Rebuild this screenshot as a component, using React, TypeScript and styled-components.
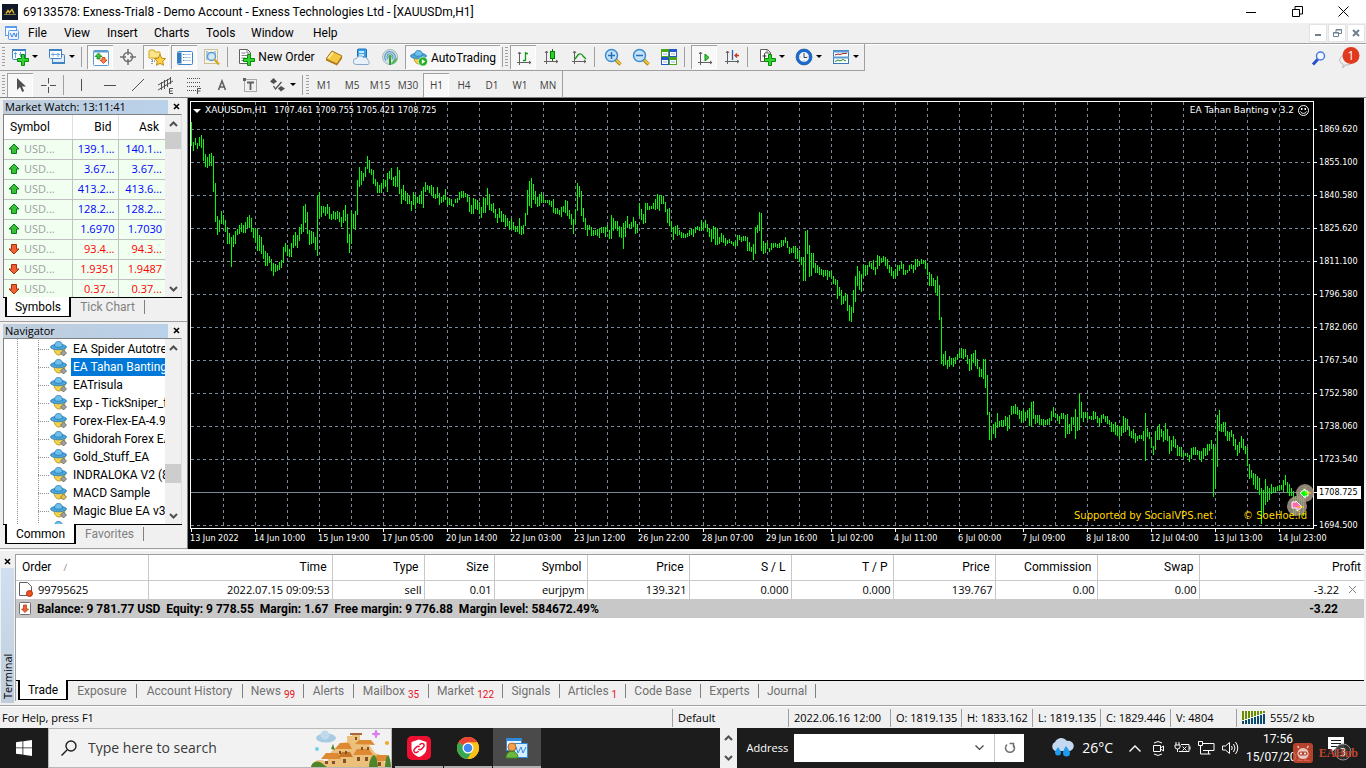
import React from "react";
import styled, { createGlobalStyle, css } from "styled-components";

const uiFont = `"Open Sans", "Noto Sans", sans-serif`;
const menuFont = `Roboto, "Open Sans", sans-serif`;
const chartFont = `"DejaVu Sans Condensed", "DejaVu Sans", sans-serif`;

const Global = createGlobalStyle`
  * { box-sizing: border-box; }
  body { margin: 0; background: #f0f0f0; font: 11px/16px ${uiFont}; color: #000; overflow: hidden; }
  button, input { font: inherit; color: inherit; border: 0; padding: 0; margin: 0; background: none; }
  svg { display: block; flex: none; }
  table { border-collapse: collapse; table-layout: fixed; }
  th { font-weight: 400; }
`;

const menuText = css`
  font-family: ${menuFont};
  font-size: 12px;
`;

/* ---------- window frame ---------- */

const Page = styled.div`
  display: flex;
  flex-direction: column;
  height: 100vh;
`;

const TitleBar = styled.header`
  display: flex;
  align-items: center;
  height: 23px;
  flex: none;
  padding-left: 2px;
  background: #fff;
`;
const Title = styled.h1`
  ${menuText}
  flex: 1;
  margin: 0 0 0 5px;
  font-weight: 400;
  line-height: 20px;
`;
const WindowButton = styled.button`
  display: grid;
  place-items: center;
  width: 46px;
  height: 21px;
`;

const MenuBar = styled.nav`
  display: flex;
  align-items: center;
  height: 20px;
  flex: none;
  padding: 0 1px 0 4px;
`;
const Menus = styled.div`
  display: flex;
  flex: 1;
  padding-left: 8px;
`;
const MenuItem = styled.button<{ $w: number }>`
  ${menuText}
  width: ${(p) => p.$w}px;
  text-align: left;
`;
const Spacer = styled.span`
  flex: 1;
`;
const ChildButton = styled.button`
  display: grid;
  place-items: center;
  width: 18px;
  height: 18px;
  margin-left: 1px;
  background: #fff;
  border: 1px solid #e2e2e2;
`;

/* ---------- toolbars ---------- */

const ToolbarRow = styled.div`
  display: flex;
  align-items: flex-start;
  justify-content: space-between;
  height: 28px;
  flex: none;
  border-top: 1px solid #a0a0a0;
  box-shadow: inset 0 1px #fff;
`;
const ToolbarRow2 = styled.div`
  height: 27px;
  flex: none;
  border-bottom: 1px solid #808080;
`;
const Toolbar = styled.div<{ $line?: boolean }>`
  display: flex;
  align-items: center;
  height: 27px;
  padding-left: 2px;
  border-right: 1px solid #a0a0a0;
  ${(p) => p.$line && "border-bottom: 1px solid #a0a0a0;"}
  width: max-content;
`;
const Grip = styled.span`
  width: 3px;
  height: 20px;
  margin-right: 1px;
  background: repeating-linear-gradient(#a0a0a0 0 1px, transparent 1px 3px);
`;
const Divider = styled.span<{ $w: number }>`
  width: ${(p) => p.$w}px;
  height: 20px;
  background: linear-gradient(#a0a0a0, #a0a0a0) 1px 0 / 1px 100% no-repeat;
`;
const ToolButton = styled.button<{ $on?: boolean; $w?: number }>`
  display: flex;
  align-items: center;
  justify-content: center;
  gap: 3px;
  width: ${(p) => p.$w ?? 26}px;
  height: 24px;
  margin: 0 1px;
  color: #505050;
  white-space: nowrap;
  ${(p) =>
    p.$on &&
    css`
      background: #f8f8f8;
      border-top: 1px solid #a0a0a0;
      border-left: 1px solid #a0a0a0;
      box-shadow: inset -1px -1px #fff;
    `}
`;
const ToolLabel = styled.span`
  ${menuText}
  color: #000;
`;
const ToolRight = styled.div`
  display: flex;
  align-items: center;
  gap: 10px;
  padding: 3px 5px 0 0;
`;
const Tf = styled.span`
  font-size: 10px;
  color: #404040;
`;

/* ---------- workspace ---------- */

const Work = styled.main`
  display: flex;
  flex: 1;
  min-height: 0;
  padding: 0 2px 1px 0;
`;
const Side = styled.aside`
  display: flex;
  flex-direction: column;
  flex: none;
  width: 188px;
  border-right: 1px solid #808080;
`;
const Panel = styled.section<{ $grow?: boolean }>`
  display: flex;
  flex-direction: column;
  ${(p) => (p.$grow ? "flex: 1; min-height: 0;" : "height: 224px; flex: none;")}
  padding: 1px 5px 4px 3px;
  border-bottom: 1px solid #a0a0a0;
`;
const Caption = styled.header`
  display: flex;
  align-items: center;
  height: 15px;
  flex: none;
  margin-right: -2px;
`;
const CaptionText = styled.h2`
  flex: 1;
  margin: 0;
  padding-left: 2px;
  font-size: 11px;
  font-weight: 400;
  line-height: 14px;
  background: linear-gradient(90deg, #bfcddb, #b9d1ea);
`;
const CaptionClose = styled.button`
  display: grid;
  place-items: center;
  width: 16px;
  height: 14px;
`;
const PanelBody = styled.div`
  display: flex;
  flex: 1;
  min-height: 0;
  overflow: hidden;
  background: #fff;
  border-top: 1px solid #808080;
  border-left: 1px solid #808080;
  border-right: 1px solid #e0e0e0;
`;
const ScrollTrack = styled.div`
  display: flex;
  flex-direction: column;
  width: 16px;
  flex: none;
  background: #f0f0f0;
`;
const ScrollEnd = styled.button`
  display: grid;
  place-items: center;
  height: 17px;
`;
const Thumb = styled.span<{ $h: number }>`
  height: ${(p) => p.$h}px;
  background: #cdcdcd;
`;

const Quotes = styled.table`
  flex: 1;
  min-width: 0;
  height: max-content;
  text-align: right;
  th { ${menuText} height: 24px; padding: 0 6px 0 0; border-right: 1px solid #e0e0e0; border-bottom: 1px solid #c0c0c0; }
  th:first-child { text-align: left; padding-left: 6px; }
  th:last-child, td:last-child { border-right: 0; }
`;
const Quote = styled.tr<{ $up: boolean }>`
  color: ${(p) => (p.$up ? "#0000ff" : "#ff0000")};
  td {
    height: 20px;
    padding: 0 3px 0 0;
    font-size: 11px;
    line-height: 16px;
    background: #f0fff0;
    border-right: 1px solid #c0c0c0;
    border-bottom: 1px solid #c0c0c0;
  }
`;
const SymbolCell = styled.div`
  display: flex;
  align-items: center;
  gap: 4px;
  padding-left: 4px;
  color: #a0a0a0;
`;

const SideTabs = styled.div`
  display: flex;
  height: 20px;
  flex: none;
  border-top: 1px solid #000;
`;
const SideTab = styled.button<{ $on?: boolean; $w: number }>`
  ${menuText}
  width: ${(p) => p.$w}px;
  line-height: 16px;
  color: #808080;
  ${(p) =>
    p.$on
      ? css`
          height: 20px;
          margin: -1px 0 0 2px;
          color: #000;
          background: #fff;
          border: solid #000;
          border-width: 0 2px 1px 2px;
        `
      : css`
          border-right: 1px solid #808080;
          margin: 2px 0;
          height: 14px;
          line-height: 14px;
        `}
`;

const Tree = styled.ul`
  flex: 1;
  min-width: 0;
  margin: 0;
  padding: 1px 0 0 13px;
  list-style: none;
  overflow: hidden;
  background: repeating-linear-gradient(#909090 0 1px, transparent 1px 2px) 13px 0 / 1px 100% no-repeat;
`;
const TreeItem = styled.li`
  display: flex;
  align-items: center;
  height: 18px;
  margin-left: 21px;
  background: repeating-linear-gradient(#909090 0 1px, transparent 1px 2px) 0 0 / 1px 100% no-repeat;
`;
const Twig = styled.span`
  flex: none;
  width: 12px;
  height: 1px;
  background: repeating-linear-gradient(90deg, #909090 0 1px, transparent 1px 2px);
`;
const TreeName = styled.button<{ $on?: boolean }>`
  ${menuText}
  height: 18px;
  flex: none;
  margin-left: 3px;
  padding: 0 2px;
  line-height: 18px;
  white-space: nowrap;
  ${(p) => p.$on && "background: #0078d7; color: #fff;"}
`;

/* ---------- chart ---------- */

const ChartPane = styled.section`
  display: grid;
  flex: 1;
  min-width: 0;
  grid-template: minmax(0, 1fr) 20px / minmax(0, 1fr) 50px;
  padding: 3px 0 0 2px;
  background: #000;
  color: #fff;
  font: 9px/13px ${chartFont};
`;
const Plot = styled.div`
  position: relative;
  border: 1px solid #fff;
  svg.series { width: 100%; height: 100%; }
`;
const PlotHead = styled.div`
  position: absolute;
  top: 2px;
  left: 2px;
  right: 4px;
  display: flex;
  align-items: center;
  gap: 4px;
`;
const WideText = styled.span`
  font-family: "DejaVu Sans", sans-serif;
`;
const PlotCredit = styled.div`
  position: absolute;
  bottom: 5px;
  right: 6px;
  display: flex;
  gap: 30px;
  color: #ffd700;
  font: 10px/14px "DejaVu Sans", sans-serif;
`;
const Markers = styled.svg`
  position: absolute;
  right: -1px;
  bottom: 10px;
`;
const PriceAxis = styled.div`
  display: flex;
  flex-direction: column;
  justify-content: space-between;
  padding-top: 22px;
  margin-bottom: -3px;
`;
const Price = styled.span<{ $now?: boolean }>`
  display: flex;
  align-items: center;
  height: 13px;
  &::before { content: ""; width: 3px; height: 1px; background: #fff; }
  span { padding: 0 2px; ${(p) => p.$now && "background: #fff; color: #000; padding-right: 3px;"} }
`;
const TimeAxis = styled.div`
  display: flex;
  grid-column: 1 / 3;
  overflow: hidden;
`;
const TimeMark = styled.span`
  flex: 0 0 64px;
  padding-top: 3px;
  white-space: nowrap;
  background: linear-gradient(#fff, #fff) 1px 0 / 1px 3px no-repeat;
`;

/* ---------- terminal ---------- */

const Terminal = styled.section`
  display: flex;
  height: 156px;
  flex: none;
  padding: 3px 2px 0 0;
  border-top: 1px solid #fff;
  border-bottom: 1px solid #a0a0a0;
`;
const TermStrip = styled.div`
  display: flex;
  flex-direction: column;
  align-items: center;
  width: 15px;
  flex: none;
`;
const TermName = styled.h2`
  flex: 1;
  width: 13px;
  margin: 0 0 2px;
  padding-top: 4px;
  font-size: 11px;
  font-weight: 400;
  line-height: 13px;
  writing-mode: vertical-rl;
  transform: rotate(180deg);
  background: linear-gradient(#bfcddb, #d0e0f0);
`;
const TermMain = styled.div`
  display: flex;
  flex-direction: column;
  flex: 1;
  min-width: 0;
  margin-bottom: 4px;
  border-top: 1px solid #a0a0a0;
  border-left: 1px solid #a0a0a0;
`;
const TermBody = styled.div`
  flex: 1;
  background: #fff;
`;
const Orders = styled.table`
  width: 100%;
  text-align: right;
  th, td { padding: 0 2px 0 0; border-right: 1px solid #c8c8c8; white-space: nowrap; }
  th { ${menuText} height: 25px; padding-right: 5px; border-bottom: 1px solid #c8c8c8; }
  td { height: 19px; font-size: 11px; }
  tr > :first-child { text-align: left; }
  th:first-child { padding-left: 6px; }
  tr > :last-child { border-right: 0; padding-right: 3px; }
`;
const OrderId = styled.span`
  display: flex;
  align-items: center;
  gap: 5px;
  padding-left: 3px;
`;
const Profit = styled.span`
  display: flex;
  align-items: center;
  justify-content: flex-end;
  gap: 10px;
  padding-right: 5px;
`;
const SortMark = styled.span`
  margin-left: 12px;
  font-size: 9px;
  color: #808080;
`;
const Totals = styled.div`
  ${menuText}
  display: flex;
  align-items: center;
  gap: 5px;
  height: 19px;
  padding: 0 26px 0 3px;
  font-weight: 700;
  background: #c8c8c8;
`;
const TermTabs = styled.div`
  display: flex;
  align-items: center;
  height: 21px;
  border-top: 1px solid #000;
`;
const TermTab = styled.button<{ $on?: boolean; $w: number }>`
  ${menuText}
  display: flex;
  align-items: center;
  justify-content: center;
  gap: 3px;
  width: ${(p) => p.$w}px;
  height: 14px;
  color: #707070;
  border-right: 1px solid #808080;
  sub { font-size: 10px; line-height: 10px; color: #e81123; vertical-align: baseline; margin-top: 8px; }
  ${(p) =>
    p.$on &&
    css`
      height: 20px;
      align-self: flex-start;
      margin: -1px 0 0 2px;
      color: #000;
      background: #fff;
      border: solid #000;
      border-width: 0 2px 1px 2px;
    `}
`;

/* ---------- status bar ---------- */

const StatusBar = styled.footer`
  display: flex;
  align-items: center;
  height: 22px;
  flex: none;
  padding-left: 2px;
  border-top: 1px solid #fff;
`;
const Status = styled.span<{ $w?: number }>`
  display: flex;
  align-items: center;
  gap: 4px;
  ${(p) => (p.$w ? `width: ${p.$w}px;` : "flex: 1;")}
  height: 18px;
  & + & { padding-left: 5px; border-left: 1px solid #a0a0a0; }
`;

/* ---------- taskbar ---------- */

const Taskbar = styled.footer`
  position: relative;
  display: flex;
  align-items: stretch;
  height: 40px;
  flex: none;
  color: #fff;
  background: #1c1c1c;
`;
const Start = styled.button`
  display: grid;
  place-items: center;
  width: 48px;
`;
const Search = styled.label`
  display: flex;
  align-items: center;
  width: 344px;
  padding-left: 12px;
  color: #3a3a3a;
  background: #f2f2f2;
  border: 1px solid #b8b8b8;
  input { flex: 1; min-width: 0; margin-left: 11px; font-size: 14px; outline: 0; }
  input::placeholder { color: #3a3a3a; opacity: 1; }
`;
const Apps = styled.div`
  display: flex;
  flex: 1;
  gap: 1px;
  padding-left: 3px;
`;
const TaskApp = styled.button<{ $on?: boolean }>`
  display: grid;
  place-items: center;
  width: 48px;
  padding-top: 2px;
  border-bottom: 2px solid #b0b0b0;
  ${(p) => p.$on && "background: #4a4a4a;"}
`;
const AppScroll = styled.div`
  display: flex;
  flex-direction: column;
  justify-content: space-around;
  align-items: center;
  width: 17px;
  background: #f0f0f0;
`;
const Address = styled.label`
  display: flex;
  align-items: center;
  gap: 6px;
  padding-left: 10px;
`;
const AddressBox = styled.span`
  display: flex;
  width: 230px;
  height: 28px;
  background: #fff;
  input { flex: 1; min-width: 0; color: #000; padding-left: 4px; outline: 0; }
`;
const BoxButton = styled.button<{ $line?: boolean }>`
  display: grid;
  place-items: center;
  width: 30px;
  color: #505050;
  ${(p) => p.$line && "border-left: 1px solid #c8c8c8;"}
`;
const Weather = styled.button`
  display: flex;
  align-items: center;
  gap: 8px;
  margin-left: 26px;
  font-size: 14px;
`;
const Tray = styled.div`
  display: flex;
  align-items: center;
  gap: 7px;
  margin-left: 13px;
`;
const TrayButton = styled.button`
  display: grid;
  place-items: center;
  width: 17px;
  height: 20px;
`;
const Clock = styled.time`
  ${menuText}
  width: 72px;
  margin-left: 3px;
  padding-top: 2px;
  line-height: 18px;
  text-align: center;
`;
const Notices = styled.button`
  width: 52px;
  display: grid;
  place-items: center;
`;
const Hub = styled.div`
  position: absolute;
  right: 8px;
  bottom: 5px;
  display: flex;
  align-items: center;
  gap: 6px;
  color: #c4452f;
  font: 700 12px/18px "Liberation Serif", serif;
`;

/* ---------- icons ---------- */

type IconProps = { children: React.ReactNode; w?: number; h?: number };
const Icon = ({ children, w = 18, h = 18 }: IconProps) => (
  <svg width={w} height={h} viewBox={`0 0 ${w} ${h}`} aria-hidden="true">
    {children}
  </svg>
);

const Caret = () => (
  <Icon w={6} h={4}>
    <path d="M0 0h6L3 3z" fill="#000" />
  </Icon>
);
const Chevron = ({ up }: { up?: boolean }) => (
  <Icon w={9} h={6}>
    <path d={up ? "M1 5l3.500-3.500L8 5" : "M1 1l3.500 3.500L8 1"} fill="none" stroke="#505050" strokeWidth="2" />
  </Icon>
);
const Cross = () => (
  <Icon w={7} h={7}>
    <path d="M1 1l5 5M6 1L1 6" stroke="#000" strokeWidth="1.600" />
  </Icon>
);
const Plus = () => <path d="M10.500 6.500h3v4h4v3h-4v4h-3v-4h-4v-3h4z" fill="#2fd62f" stroke="#0a8a0a" strokeWidth="1" />;
const NewChart = () => (
  <Icon>
    <rect x="1.500" y="1.500" width="13" height="10" rx="1" fill="#fff" stroke="#3f83c4" />
    <path d="M1 2h14" stroke="#3f83c4" strokeWidth="2" />
    <path d="M4.500 4v6M3 5.500h3M9.500 4v5M8 6.500h4" stroke="#6fa5d8" />
    <Plus />
  </Icon>
);
const Profiles = () => (
  <Icon>
    <rect x="4.500" y="6.500" width="12" height="9" rx="1" fill="#dcecfa" stroke="#3f83c4" />
    <path d="M4 15h13" stroke="#3f83c4" strokeWidth="2" />
    <rect x="1.500" y="1.500" width="12" height="9" rx="1" fill="#fff" stroke="#3f83c4" />
    <path d="M1 2h13" stroke="#3f83c4" strokeWidth="2" />
    <path d="M3 6.500h9M5 4.500v4M10 5v4" stroke="#6fa5d8" />
  </Icon>
);
const WatchIcon = () => (
  <Icon>
    <rect x="1.500" y="1.500" width="15" height="15" rx="1" fill="#fff" stroke="#5b9bd5" />
    <path d="M2 2.500h14" stroke="#5b9bd5" strokeWidth="2" />
    <path d="M6.500 4l3.500 3.500H8V10H5V7.500H3z" fill="#3fc43f" stroke="#0a7a0a" strokeWidth=".7" />
    <path d="M11.500 14.500L8 11h2V8.500h3V11h2z" fill="#ff7d4d" stroke="#c03000" strokeWidth=".7" />
  </Icon>
);
const Target = () => (
  <Icon>
    <circle cx="9" cy="9" r="4.500" fill="none" stroke="#707070" strokeWidth="1.600" />
    <path d="M9 1v6M9 11v6M1 9h6M11 9h6" stroke="#707070" strokeWidth="1.500" />
  </Icon>
);
const star = "M12 5.500l1.700 3.700 3.900.4-2.900 2.700.8 4-3.500-2-3.500 2 .8-4-2.900-2.700 3.900-.4z";
const FolderStar = () => (
  <Icon>
    <path d="M1 2l1-1h4l1 2h5v6H1z" fill="#fbe58a" stroke="#d0a520" />
    <path d="M4 10v6M4 12h3" stroke="#555" strokeDasharray="1 1" />
    <path d={star} fill="#ffd23e" stroke="#c08a10" />
  </Icon>
);
const DataIcon = () => (
  <Icon>
    <rect x="1.500" y="2.500" width="15" height="13" rx="1" fill="#fff" stroke="#3f83c4" />
    <path d="M2 3.500h3.500v11H2z" fill="#2f78c4" />
    <path d="M7.500 5.500H15M7.500 8.500H15M7.500 11.500H15" stroke="#a8c8e8" />
    <path d="M3.500 5v9M7.500 5v9" stroke="#5080b0" strokeDasharray="1 2" />
  </Icon>
);
const Tester = () => (
  <Icon>
    <rect x="1.500" y="1.500" width="13" height="14" fill="#f8f4e4" stroke="#c9bf9a" />
    <path d="M4 3v9M12 3v5M6 4v4" stroke="#5b9bd5" />
    <circle cx="8.500" cy="8.500" r="4" fill="#cfe6f8" fillOpacity=".85" stroke="#5b9bd5" strokeWidth="1.400" />
    <path d="M11.500 11.500l4.500 5" stroke="#d9a62a" strokeWidth="2.400" />
  </Icon>
);
const OrderIcon = () => (
  <Icon>
    <path d="M2.500 1.500h8l3 3v11h-11z" fill="#fff" stroke="#606060" />
    <path d="M10 2v3h3M4.500 5h4M4.500 7.500h7M4.500 10h4M4.500 12.500h3" stroke="#808080" fill="none" />
    <Plus />
  </Icon>
);
const Book = () => (
  <Icon>
    <path d="M1 11l6-8 10 5-5 8z" fill="#f4c842" stroke="#a07010" />
    <path d="M1 11l11 5 5-8v2.500l-5 7L1 12.500z" fill="#b87820" />
    <path d="M3.500 10L8 4.500" stroke="#fff2b0" strokeWidth="1.500" />
  </Icon>
);
const Cloud = () => (
  <Icon>
    <rect x="4.500" y="1" width="9" height="9" rx="1" fill="#3da0ec" stroke="#1a70c0" />
    <path d="M6 4h5M6 7h5" stroke="#fff" strokeWidth="1.500" />
    <path d="M3 16.500a3 3 0 01.5-6 4 4 0 017-1 3.500 3.500 0 014.500 3 2.200 2.200 0 010 4z" fill="#e8f0fa" stroke="#8aa8cc" />
  </Icon>
);
const Signal = () => (
  <Icon>
    <circle cx="9" cy="9" r="7.500" fill="#d4e0e4" stroke="#a4bcc4" />
    <path d="M5 12.500a5.300 5.300 0 117.500.5M7 11a3 3 0 114 0" fill="none" stroke="#5c9cc4" strokeWidth="1.200" />
    <path d="M9.500 16.500c4 0 7-3 7-7-2 1-5 3-7 7z" fill="#5cb85c" />
    <path d="M9 9v8" stroke="#2f9a3a" strokeWidth="2" />
    <circle cx="9" cy="8.500" r="1.700" fill="#3fae4a" />
  </Icon>
);
const Hat = ({ gem }: { gem?: string }) => (
  <>
    <path d="M4 8c0 4 2 7 5 7s6-3 6-7z" fill="#f4d34a" stroke="#b08a18" strokeWidth=".8" />
    <ellipse cx="8.500" cy="7" rx="8" ry="2.800" fill="#4aa6dc" stroke="#2a78b0" strokeWidth=".8" />
    <path d="M4.500 6.500C4.500 3 6 1.500 8.500 1.500s4 1.500 4 5c-2 1-6 1-8 0z" fill="#6cc0ec" stroke="#2a78b0" strokeWidth=".8" />
    {gem && <path d="M13.500 10l3 3-3 3-3-3z" fill={gem} stroke="#606060" strokeWidth=".8" />}
  </>
);
const AutoIcon = () => (
  <Icon>
    <Hat />
    <circle cx="13" cy="12.500" r="4.500" fill="#22b022" stroke="#fff" strokeWidth=".6" />
    <path d="M11.800 10v5l3.500-2.500z" fill="#fff" />
  </Icon>
);
const Axes = () => <path d="M4.500 3v13M2 13.500h14M3 5l1.500-2L6 5M14 12l2 1.500-2 1.500" fill="none" stroke="#606060" />;
const BarsIcon = () => (
  <Icon>
    <Axes />
    <path d="M10.500 3v9M10.500 4.500h2.500M8 11.500h2.500" stroke="#109a10" strokeWidth="1.300" />
  </Icon>
);
const CandleIcon = () => (
  <Icon>
    <Axes />
    <path d="M10.500 1v12" stroke="#087808" />
    <rect x="8.500" y="3.500" width="4" height="7" fill="#28d428" stroke="#087808" />
  </Icon>
);
const LineIcon = () => (
  <Icon>
    <Axes />
    <path d="M5 11l3-4c2-2 4-1 5 1l3 3" fill="none" stroke="#109a10" strokeWidth="1.300" />
  </Icon>
);
const Lens = ({ plus }: { plus?: boolean }) => (
  <Icon>
    <path d="M11 11l5.500 5.500" stroke="#b8860b" strokeWidth="3.400" />
    <path d="M11 11l5.500 5" stroke="#f4d050" strokeWidth="1.600" />
    <circle cx="7.500" cy="7.500" r="6" fill="#c4e2f8" stroke="#3a8ccc" strokeWidth="1.500" />
    <path d={plus ? "M4 7.500h7M7.500 4v7" : "M4 7.500h7"} stroke="#2a70b8" strokeWidth="1.500" />
  </Icon>
);
const Tile = () => (
  <Icon>
    <path d="M1 1h8v8H1zM9 9h8v8H9z" fill="#4aa818" />
    <path d="M9 1h8v8H9zM1 9h8v8H1z" fill="#2458c8" />
    <path d="M2 4h6v4H2zM10 4h6v4h-6zM2 12h6v4H2zM10 12h6v4h-6z" fill="#fff" />
    <path d="M3 6h4M11 6h4M3 14h4M11 14h4" stroke="#90b8e0" />
  </Icon>
);
const AutoScroll = () => (
  <Icon>
    <Axes />
    <path d="M9 5v7l4-3.500z" fill="#3fd03f" stroke="#0a8a0a" />
  </Icon>
);
const Shift = () => (
  <Icon>
    <Axes />
    <path d="M9.500 2v10" stroke="#2a60a8" strokeWidth="1.300" />
    <path d="M16 7.500h-4M14 5.500l-2 2 2 2" stroke="#c83810" strokeWidth="1.300" fill="none" />
  </Icon>
);
const Indicators = () => (
  <Icon>
    <path d="M2.500 1.500h7l3 3v9h-10z" fill="#fff" stroke="#606060" />
    <path d="M9 2v3h3" fill="none" stroke="#606060" />
    <path d="M8.500 5c-2-1-2 1-2 2v5M4.500 8h4" stroke="#303030" fill="none" />
    <Plus />
  </Icon>
);
const ClockIcon = () => (
  <Icon>
    <circle cx="9" cy="9" r="6.500" fill="#f4f8fc" stroke="#1c6cd0" strokeWidth="3" />
    <circle cx="9" cy="9" r="8" fill="none" stroke="#104890" strokeWidth=".6" />
    <path d="M9 5v4.500h3" fill="none" stroke="#404040" />
    <path d="M9 12.500v1M4.500 9h1M12.500 9h1" stroke="#808080" />
  </Icon>
);
const Template = () => (
  <Icon>
    <rect x="1.500" y="2.500" width="15" height="13" fill="#fff" stroke="#3a7ab8" />
    <path d="M1 3.500h16M1 9.500h16" stroke="#5b9bd5" strokeWidth="2" />
    <path d="M3 7l3-1 2 .5 3-1 4-.2" fill="none" stroke="#a02020" />
    <path d="M3 13.500l3-1.500 2 1 3-1.500 3 1.500" fill="none" stroke="#209020" />
  </Icon>
);
const CursorIcon = () => (
  <Icon>
    <path d="M5 2v12l3-3 2.200 5 2-1-2.200-4.500h4z" fill="#505050" />
  </Icon>
);
const CrossHair = () => (
  <Icon>
    <path d="M9.500 2v5.500M9.500 11v6M2 9.500h5.500M11 9.500h6" stroke="#505050" />
  </Icon>
);
const Stroke = ({ d }: { d: string }) => (
  <Icon>
    <path d={d} stroke="#505050" fill="none" />
  </Icon>
);
const Channel = () => (
  <Icon>
    <path d="M1 9L14 2M1 14L16 5M4.500 6v8M7.500 4v9M10.500 3v8M13.500 1v7" stroke="#505050" />
    <path d="M16 12.500h-3.500v5H16M12.500 15h3" stroke="#505050" fill="none" />
  </Icon>
);
const Fibo = () => (
  <Icon>
    <path d="M2 2.500h14M2 6.500h14M2 10.500h14M2 14.500h9" stroke="#505050" strokeDasharray="1 1" />
    <path d="M16 12.500h-3.500V18M12.500 15h3" stroke="#505050" fill="none" />
  </Icon>
);
const TextIcon = () => (
  <Icon>
    <path d="M5.500 14L9 5l3.500 9M6.500 11h5" stroke="#606060" strokeWidth="1.600" fill="none" />
  </Icon>
);
const LabelIcon = () => (
  <Icon>
    <rect x="3.500" y="3.500" width="12" height="12" fill="none" stroke="#606060" strokeDasharray="1 1" />
    <path d="M6 6.500h7M9.500 6.500V14" stroke="#606060" strokeWidth="1.800" />
    <path d="M2 2h3v3H2z" fill="#606060" />
  </Icon>
);
const Arrows = () => (
  <Icon>
    <path d="M4.500 2L8 5.500 4.500 8 1 5.500z" fill="#505050" />
    <path d="M12 10l4 2.500-4 3-3-3z" fill="#505050" />
    <path d="M4.500 10l2 3 6-7" fill="none" stroke="#505050" strokeWidth="1.300" />
  </Icon>
);
const QuoteArrow = ({ up }: { up: boolean }) => (
  <Icon w={12} h={12}>
    <path
      d={up ? "M6 1l5 5H8.500v4.500h-5V6H1z" : "M6 11L1 6h2.500V1.500h5V6H11z"}
      fill={up ? "#35c035" : "#f06030"}
      stroke={up ? "#0a7a1a" : "#a83010"}
    />
  </Icon>
);
const HatIcon = ({ gem }: { gem: string }) => (
  <Icon>
    <Hat gem={gem} />
  </Icon>
);
const AppLogo = () => (
  <Icon w={16} h={16}>
    <rect width="16" height="16" fill="#10182a" />
    <path d="M4 9.500l2-3 1.500 2 2.500-3 2 4" stroke="#d8b030" strokeWidth="1.500" fill="none" />
    <path d="M2 10.500h12" stroke="#8a8040" />
  </Icon>
);
const MenuLogo = () => (
  <Icon w={16} h={16}>
    <rect x="1.500" y="1.500" width="11" height="9" fill="#fff" stroke="#5b9bf0" />
    <path d="M1 2h12" stroke="#5b9bf0" strokeWidth="2" />
    <rect x="4.500" y="5.500" width="10" height="9" rx="1" fill="#eaf3ff" stroke="#5b9bf0" />
    <path d="M6 8l2 4 2-4 2 4 1-4" fill="none" stroke="#3a80e0" />
  </Icon>
);

const Castle = () => (
  <Icon w={80} h={38}>
    <circle cx="6" cy="20" r="2" fill="#6fd3e8" />
    <circle cx="76" cy="14" r="2" fill="#f5a623" />
    <path d="M65 1l1 3 3 1-3 1-1 3-1-3-3-1 3-1z" fill="#d97af0" stroke="#d97af0" />
    <ellipse cx="15" cy="9" rx="10" ry="4.500" fill="#a8cbe4" />
    <circle cx="14" cy="6" r="4.500" fill="#c0daec" />
    <path d="M0 38c2-7 9-9 16-5l4-10 10-9 6-1V7h10v6l12 3 6 8 6 2 6 12z" fill="#ecc07a" />
    <path d="M39 4h12v2H39z" fill="#a8683a" />
    <path d="M41 6h8v8h-8z" fill="#eac47f" />
    <path d="M24 20l5-6h9l3 6zM44 15l4-4h12l4 5zM10 30l5-6h12l3 6zM42 26l4-6h12l4 6zM62 32l4-6h10l3 6z" fill="#dd8a32" />
    <path d="M27 28l4-5h8l3 5z" fill="#c97528" />
    <path d="M28 22h2v3h-2zM34 22h2v3h-2zM50 18h2v3h-2zM56 18h2v3h-2zM14 32h3v3h-3zM21 32h3v3h-3zM32 30h3v4h-3zM46 28h3v4h-3zM54 28h3v4h-3zM67 33h3v4h-3zM44 8h2v3h-2z" fill="#80502c" />
    <path d="M0 38c1-6 8-8 13-2l3 2zM58 38c0-6 3-12 5-12s4 8 4 12zM20 20l2-5 2 6zM74 38c0-6 2-12 3-12s3 6 3 12z" fill="#4f8428" />
  </Icon>
);

/* ---------- data ---------- */

// Hourly high,low pairs, measured down from the top of the price scale.
const BARS = `22,46 42,51 38,45 43,49 37,46 35,48 39,61 54,67 57,68 54,66 53,66 56,92 83,122 116,135 120,132 111,124 115,124 120,132 127,144 133,144
137,167 135,147 131,144 129,135 125,134 123,132 125,133 122,133 117,128 115,128 118,132 128,138 128,142 129,151 135,151 137,154 145,159 151,166 153,166 156,163
159,171 163,176 164,172 165,171 162,170 160,168 147,163 143,152 145,156 149,157 143,157 135,148 132,146 135,148 127,141 124,134 106,132 104,123 112,134 130,145
131,144 132,143 137,150 96,156 92,118 106,117 106,113 107,116 104,114 107,119 114,120 111,119 112,120 111,119 112,122 117,127 110,123 105,121 114,143 134,153
111,144 114,128 111,130 80,115 67,87 71,85 73,81 67,77 56,69 60,73 69,75 70,84 79,86 82,93 85,93 83,93 79,88 80,87 73,92 71,79
68,80 77,86 76,87 67,87 70,94 89,104 85,100 91,101 93,104 96,104 101,111 92,105 95,109 97,103 95,104 91,104 87,108 82,92 85,90 86,93
85,95 87,98 94,99 87,98 93,105 97,103 95,102 89,100 97,106 98,105 99,106 104,107 99,103 98,103 92,100 91,98 91,98 93,97 94,102 97,112
105,114 98,114 99,109 100,110 102,114 107,118 97,113 98,113 88,105 94,110 104,111 103,113 109,118 114,123 108,118 111,122 114,122 115,127 118,126 121,130
118,129 122,130 126,132 126,132 118,134 126,135 125,134 113,126 90,115 81,106 78,108 84,100 91,104 97,107 94,106 92,103 95,103 100,103 100,103 100,105
101,107 99,113 108,114 108,114 110,115 107,117 106,112 100,113 101,116 110,119 114,125 119,134 109,124 83,111 86,97 91,116 108,122 118,130 125,136 125,130
127,136 130,136 130,135 129,136 129,138 127,133 127,133 127,137 125,132 130,139 115,139 118,131 121,129 121,131 126,137 127,138 123,149 121,137 116,128 124,128
122,128 117,127 121,134 124,133 103,116 109,120 114,124 103,123 103,110 106,110 106,109 103,109 99,110 94,109 95,111 95,104 96,104 102,112 109,123 108,126
121,132 127,140 126,134 125,136 130,135 132,138 133,138 134,138 133,137 130,136 129,135 129,137 127,133 126,130 127,131 120,131 123,130 120,128 124,132 128,137
129,142 126,139 127,145 128,145 137,144 133,142 135,143 138,146 140,144 139,143 141,144 142,146 141,147 135,146 135,140 137,142 136,141 136,141 137,151 142,151
147,152 144,160 127,154 125,133 112,131 113,151 141,154 143,153 142,149 148,152 143,150 143,148 143,147 144,148 143,148 140,147 140,146 137,143 141,148 147,154
148,153 146,153 146,159 148,159 150,162 157,165 157,181 131,181 130,154 145,177 153,176 153,168 163,173 165,173 167,175 169,175 170,177 170,176 170,180 171,177
171,178 176,184 179,185 180,199 187,196 190,205 196,204 193,201 195,211 205,221 207,222 190,213 176,202 166,186 171,190 174,192 165,178 165,176 165,175 162,167
163,169 160,170 167,175 155,169 156,166 158,163 156,162 157,166 159,169 165,173 167,176 171,179 169,178 165,176 165,171 162,169 164,175 170,175 170,173 165,171
164,169 165,173 159,170 159,167 161,166 159,164 160,164 160,169 163,175 172,186 174,186 178,186 180,193 176,196 185,220 217,264 254,266 251,265 260,269 256,267
258,265 258,267 257,264 254,260 251,258 248,258 249,259 249,257 255,264 259,271 254,270 253,263 250,266 259,269 267,277 269,277 259,279 259,288 275,315 312,340
329,340 324,334 322,338 313,328 321,327 320,326 320,327 316,326 317,331 315,329 306,315 306,314 304,314 307,315 310,319 311,323 309,322 312,321 310,318 308,326
302,327 301,319 315,324 315,323 315,325 319,325 319,326 320,325 319,325 318,325 311,321 307,317 313,318 314,321 316,324 313,319 313,319 315,338 314,334 324,334
317,331 317,325 309,339 317,331 294,330 302,318 312,322 312,318 312,320 316,319 316,320 311,320 312,319 316,323 318,326 315,323 314,319 316,322 316,324 320,325
322,332 324,332 322,335 325,336 326,339 326,336 316,333 318,332 319,330 327,336 331,338 329,339 333,343 336,341 335,339 335,339 331,341 313,361 328,337 332,339
337,348 346,355 331,350 327,340 324,340 329,337 331,342 323,340 329,341 336,354 340,351 336,347 339,348 345,356 347,356 347,357 352,358 353,356 353,357 355,362
348,359 347,355 347,355 350,355 351,359 351,362 348,359 348,356 344,355 344,351 340,349 344,397 347,389 315,367 310,331 324,332 322,332 322,336 331,341 332,341
330,337 334,346 339,350 345,356 342,353 336,348 339,350 346,354 347,366 364,379 370,378 373,385 374,389 376,390 378,395 388,424 390,417 379,405 386,402 388,400
384,394 387,393 387,393 386,391 385,391 385,390 380,392 375,385 382,393 384,396 388,396 391,414 396,416 392,412 394,410 390,406 388,416 386,400`
  .split(/\s+/)
  .map((pair) => pair.split(",").map(Number));

const barPath = BARS.map(([hi, lo], i) => `M${i * 2} ${hi}h1V${lo}h-1z`).join("");

const PRICES = ["1869.620", "1855.100", "1840.580", "1825.620", "1811.100", "1796.580", "1782.060", "1767.540", "1752.580", "1738.060", "1723.540", "1708.725", "1694.500"];
const TIMES = ["13 Jun 2022", "14 Jun 10:00", "15 Jun 19:00", "17 Jun 05:00", "20 Jun 14:00", "22 Jun 03:00", "23 Jun 12:00", "26 Jun 22:00", "28 Jun 07:00", "29 Jun 16:00", "1 Jul 02:00", "4 Jul 11:00", "6 Jul 00:00", "7 Jul 09:00", "8 Jul 18:00", "12 Jul 04:00", "13 Jul 13:00", "14 Jul 23:00"];
const QUOTES: [string, string, boolean][] = [
  ["139.1...", "140.1...", true],
  ["3.67...", "3.67...", true],
  ["413.2...", "413.6...", true],
  ["128.2...", "128.2...", true],
  ["1.6970", "1.7030", true],
  ["93.4...", "94.3...", false],
  ["1.9351", "1.9487", false],
  ["0.37...", "0.37...", false],
];
const ADVISORS = ["EA Spider Autotrend", "EA Tahan Banting", "EATrisula", "Exp - TickSniper_full", "Forex-Flex-EA-4.93", "Ghidorah Forex EA", "Gold_Stuff_EA", "INDRALOKA V2 (8)", "MACD Sample", "Magic Blue EA v3", "Moving Average"];
const MENUS: [string, number][] = [["File", 36], ["View", 43], ["Insert", 47], ["Charts", 52], ["Tools", 45], ["Window", 62], ["Help", 40]];
const ORDER_COLS: [string, string, number | undefined][] = [
  ["Order", "99795625", 132],
  ["Time", "2022.07.15 09:09:53", 184],
  ["Type", "sell", 92],
  ["Size", "0.01", 70],
  ["Symbol", "eurjpym", 93],
  ["Price", "139.321", 102],
  ["S / L", "0.000", 102],
  ["T / P", "0.000", 102],
  ["Price", "139.767", 102],
  ["Commission", "0.00", 102],
  ["Swap", "0.00", 102],
  ["Profit", "-3.22", undefined],
];
const TERM_TABS: [string, string, number][] = [
  ["Exposure", "", 69], ["Account History", "", 106], ["News", "99", 61], ["Alerts", "", 50], ["Mailbox", "35", 75], ["Market", "122", 74],
  ["Signals", "", 57], ["Articles", "1", 66], ["Code Base", "", 75], ["Experts", "", 58], ["Journal", "", 57],
];
const STATUS: [string, number][] = [["Default", 116], ["2022.06.16 12:00", 102], ["O: 1819.135", 71], ["H: 1833.162", 71], ["L: 1819.135", 68], ["C: 1829.446", 70], ["V: 4804", 66]];

const Scroll = ({ before, thumb }: { before: number; thumb: number }) => (
  <ScrollTrack>
    <ScrollEnd aria-label="Scroll up"><Chevron up /></ScrollEnd>
    <span style={{ flex: before }} />
    <Thumb $h={thumb} />
    <span style={{ flex: 100 - before }} />
    <ScrollEnd aria-label="Scroll down"><Chevron /></ScrollEnd>
  </ScrollTrack>
);

function MarketWatch() {
  return (
    <Panel>
      <Caption>
        <CaptionText>Market Watch: 13:11:41</CaptionText>
        <CaptionClose aria-label="Close Market Watch"><Cross /></CaptionClose>
      </Caption>
      <PanelBody>
        <Quotes>
          <colgroup><col width="68" /><col width="46" /><col /></colgroup>
          <thead><tr><th>Symbol</th><th>Bid</th><th>Ask</th></tr></thead>
          <tbody>
            {QUOTES.map(([bid, ask, up], i) => (
              <Quote key={i} $up={up}>
                <td><SymbolCell><QuoteArrow up={up} />USD...</SymbolCell></td>
                <td>{bid}</td>
                <td>{ask}</td>
              </Quote>
            ))}
          </tbody>
        </Quotes>
        <Scroll before={0} thumb={17} />
      </PanelBody>
      <SideTabs>
        <SideTab $on $w={66}>Symbols</SideTab>
        <SideTab $w={74}>Tick Chart</SideTab>
      </SideTabs>
    </Panel>
  );
}

function Navigator() {
  return (
    <Panel $grow>
      <Caption>
        <CaptionText>Navigator</CaptionText>
        <CaptionClose aria-label="Close Navigator"><Cross /></CaptionClose>
      </Caption>
      <PanelBody>
        <Tree>
          {ADVISORS.map((name) => (
            <TreeItem key={name}>
              <Twig />
              <HatIcon gem={name === "MACD Sample" ? "#f0c040" : "#a0a0a0"} />
              <TreeName $on={name === "EA Tahan Banting"}>{name}</TreeName>
            </TreeItem>
          ))}
        </Tree>
        <Scroll before={82} thumb={19} />
      </PanelBody>
      <SideTabs>
        <SideTab $on $w={71}>Common</SideTab>
        <SideTab $w={68}>Favorites</SideTab>
      </SideTabs>
    </Panel>
  );
}

function Chart() {
  return (
    <ChartPane>
      <Plot>
        <svg className="series" viewBox="0 2 1122 426" preserveAspectRatio="none" shapeRendering="crispEdges" role="img" aria-label="XAUUSDm hourly bars">
          <g stroke="#778899" strokeDasharray="3 3">
            {Array.from({ length: 34 }, (_, i) => (
              <path key={i} d={`M${32 * i + 32}.5 2V428`} />
            ))}
            {Array.from({ length: 13 }, (_, i) => (
              <path key={i} d={`M0 ${33 * i + 29}.5H1122`} />
            ))}
          </g>
          <path d="M0 392.500H1122" stroke="#778899" />
          <path d={barPath} fill="#00ff00" />
        </svg>
        <PlotHead>
          <Icon w={8} h={4}><path d="M0 0h8L4 4z" fill="#fff" /></Icon>
          <WideText>XAUUSDm,H1&nbsp;</WideText>
          1707.461 1709.755 1705.421 1708.725
          <Spacer />
          <WideText>EA Tahan Banting v 3.2</WideText>
          <Icon w={11} h={11}>
            <circle cx="5.500" cy="5.500" r="5" fill="none" stroke="#fff" />
            <path d="M3 3h1.500v2H3zM6.500 3H8v2H6.500z" fill="#fff" />
            <path d="M2.500 6.500c1 2.500 5 2.500 6 0" fill="none" stroke="#fff" />
          </Icon>
        </PlotHead>
        <Markers width="28" height="34" aria-hidden="true">
          <circle cx="19" cy="9" r="9" fill="#a89888" fillOpacity=".85" />
          <circle cx="11" cy="22" r="10" fill="#a89888" fillOpacity=".85" />
          <path d="M14 9l5-4v2h3v5h-3v2z" fill="#00ff00" stroke="#fff" />
          <path d="M19 9h6" stroke="#ffe000" />
          <path d="M6 18h4v-1l6 6-5 4v-3H6z" fill="#ff69b4" stroke="#fff" />
          <path d="M11 23h7" stroke="#ffe000" />
        </Markers>
        <PlotCredit>
          <span>Supported by SocialVPS.net</span>
          <span>© SoeHoe.id</span>
        </PlotCredit>
      </Plot>
      <PriceAxis>
        {PRICES.map((p) => (
          <Price key={p} $now={p === "1708.725"}><span>{p}</span></Price>
        ))}
      </PriceAxis>
      <TimeAxis>
        {TIMES.map((t) => (
          <TimeMark key={t}>{t}</TimeMark>
        ))}
      </TimeAxis>
    </ChartPane>
  );
}

const Tool = ({ label, on, children }: { label: string; on?: boolean; children: React.ReactNode }) => (
  <ToolButton aria-label={label} $on={on}>{children}</ToolButton>
);
const DropTool = ({ label, children }: { label: string; children: React.ReactNode }) => (
  <ToolButton aria-label={label} $w={35}>{children}<Caret /></ToolButton>
);

export default function App() {
  return (
    <Page>
      <Global />
      <TitleBar>
        <AppLogo />
        <Title>69133578: Exness-Trial8 - Demo Account - Exness Technologies Ltd - [XAUUSDm,H1]</Title>
        <WindowButton aria-label="Minimize"><Icon w={10} h={10}><path d="M0 5.500h10" stroke="#000" /></Icon></WindowButton>
        <WindowButton aria-label="Restore">
          <Icon w={11} h={11}><path d="M.5 3.500h7v7h-7zM3 3V.5h7.500V8H8" fill="none" stroke="#000" /></Icon>
        </WindowButton>
        <WindowButton aria-label="Close"><Icon w={11} h={11}><path d="M.5.5l10 10M10.500.5l-10 10" stroke="#000" /></Icon></WindowButton>
      </TitleBar>
      <MenuBar>
        <MenuLogo />
        <Menus>
          {MENUS.map(([name, w]) => (
            <MenuItem key={name} $w={w}>{name}</MenuItem>
          ))}
        </Menus>
        <ChildButton aria-label="Minimize chart"><Icon w={8} h={8}><path d="M1 6h6" stroke="#708090" strokeWidth="2" /></Icon></ChildButton>
        <ChildButton aria-label="Restore chart">
          <Icon w={9} h={8}><path d="M.5 3.500h5v4h-5zM3 3V.5h5.500v4H6M0 4h6M3 1h6" fill="none" stroke="#708090" /></Icon>
        </ChildButton>
        <ChildButton aria-label="Close chart"><Icon w={8} h={8}><path d="M1 1l6 6M7 1L1 7" stroke="#708090" strokeWidth="2" /></Icon></ChildButton>
      </MenuBar>

      <ToolbarRow>
        <Toolbar $line>
          <Grip />
          <DropTool label="New chart"><NewChart /></DropTool>
          <DropTool label="Profiles"><Profiles /></DropTool>
          <Divider $w={6} />
          <Tool label="Market Watch" on><WatchIcon /></Tool>
          <Tool label="Data window"><Target /></Tool>
          <Tool label="Navigator" on><FolderStar /></Tool>
          <Tool label="Terminal" on><DataIcon /></Tool>
          <Tool label="Strategy tester"><Tester /></Tool>
          <Divider $w={6} />
          <ToolButton $w={86}><OrderIcon /><ToolLabel>New Order</ToolLabel></ToolButton>
          <Tool label="MetaEditor"><Book /></Tool>
          <Tool label="Hosting"><Cloud /></Tool>
          <Tool label="Signals"><Signal /></Tool>
          <ToolButton $on $w={95}><AutoIcon /><ToolLabel>AutoTrading</ToolLabel></ToolButton>
          <Divider $w={4} />
          <Grip />
          <Tool label="Bar chart" on><BarsIcon /></Tool>
          <Tool label="Candlesticks"><CandleIcon /></Tool>
          <Tool label="Line chart"><LineIcon /></Tool>
          <Divider $w={6} />
          <Tool label="Zoom in"><Lens plus /></Tool>
          <Tool label="Zoom out"><Lens /></Tool>
          <Tool label="Tile windows"><Tile /></Tool>
          <Divider $w={7} />
          <Tool label="Auto scroll" on><AutoScroll /></Tool>
          <Tool label="Chart shift"><Shift /></Tool>
          <Divider $w={7} />
          <DropTool label="Indicators"><Indicators /></DropTool>
          <DropTool label="Periods"><ClockIcon /></DropTool>
          <DropTool label="Templates"><Template /></DropTool>
        </Toolbar>
        <ToolRight>
          <button aria-label="Search">
            <Icon w={16} h={16}>
              <path d="M7 9l-5 5.500" stroke="#2a50c8" strokeWidth="3" />
              <circle cx="9.500" cy="6" r="4" fill="#f4f8ff" stroke="#4a7ae0" strokeWidth="1.500" />
            </Icon>
          </button>
          <button aria-label="1 new message">
            <svg width="24" height="22">
              <path d="M4 10c4-3 12-2 12 3s-6 5-8 5l-2 3v-4c-4-1-4-5-2-7z" fill="#eee" stroke="#b8b8b8" />
              <circle cx="14" cy="8.500" r="8.500" fill="#e03a1e" />
              <text x="14" y="13" fontSize="12" fill="#fff" textAnchor="middle">1</text>
            </svg>
          </button>
        </ToolRight>
      </ToolbarRow>
      <ToolbarRow2>
        <Toolbar>
          <Grip />
          <Tool label="Cursor" on><CursorIcon /></Tool>
          <Tool label="Crosshair"><CrossHair /></Tool>
          <Divider $w={6} />
          <Tool label="Vertical line"><Stroke d="M8.500 3v12" /></Tool>
          <Tool label="Horizontal line"><Stroke d="M3 9.500h12" /></Tool>
          <Tool label="Trend line"><Stroke d="M3 15L15 3" /></Tool>
          <Tool label="Equidistant channel"><Channel /></Tool>
          <Tool label="Fibonacci"><Fibo /></Tool>
          <Tool label="Text"><TextIcon /></Tool>
          <Tool label="Text label"><LabelIcon /></Tool>
          <DropTool label="Arrows"><Arrows /></DropTool>
          <Divider $w={5} />
          <Grip />
          {["M1", "M5", "M15", "M30", "H1", "H4", "D1", "W1", "MN"].map((tf) => (
            <ToolButton key={tf} $on={tf === "H1"}><Tf>{tf}</Tf></ToolButton>
          ))}
        </Toolbar>
      </ToolbarRow2>

      <Work>
        <Side>
          <MarketWatch />
          <Navigator />
        </Side>
        <Chart />
      </Work>

      <Terminal>
        <TermStrip>
          <CaptionClose aria-label="Close Terminal"><Cross /></CaptionClose>
          <TermName>Terminal</TermName>
        </TermStrip>
        <TermMain>
          <TermBody>
            <Orders>
              <colgroup>{ORDER_COLS.map(([n, , w], i) => <col key={n + i} width={w} />)}</colgroup>
              <thead>
                <tr>{ORDER_COLS.map(([n], i) => <th key={i}>{n}{i === 0 && <SortMark>/</SortMark>}</th>)}</tr>
              </thead>
              <tbody>
                <tr>
                  {ORDER_COLS.map(([, v], i) => (
                    <td key={i}>
                      {i === 0 ? (
                        <OrderId>
                          <Icon w={14} h={15}>
                            <path d="M.5.5h8l4 4v9H.5z" fill="#fff" stroke="#606060" />
                            <circle cx="10.500" cy="11.500" r="3" fill="#f05020" stroke="#b03010" />
                          </Icon>
                          {v}
                        </OrderId>
                      ) : i === 11 ? (
                        <Profit>{v}<Icon w={7} h={7}><path d="M0 0l7 7M7 0L0 7" stroke="#808080" /></Icon></Profit>
                      ) : (
                        v
                      )}
                    </td>
                  ))}
                </tr>
              </tbody>
            </Orders>
            <Totals>
              <Icon w={13} h={14}>
                <rect x=".5" y=".5" width="11" height="12" rx="1" fill="#fff" stroke="#707070" />
                <path d="M6 10.500L2.500 7h2V3h3v4h2z" fill="#f06030" stroke="#a83010" strokeWidth=".7" />
              </Icon>
              Balance: 9 781.77 USD&nbsp; Equity: 9 778.55&nbsp; Margin: 1.67&nbsp; Free margin: 9 776.88&nbsp; Margin level: 584672.49%
              <Spacer />
              -3.22
            </Totals>
          </TermBody>
          <TermTabs>
            <TermTab $on $w={50}>Trade</TermTab>
            {TERM_TABS.map(([name, count, w]) => (
              <TermTab key={name} $w={w}>{name}{count && <sub>{count}</sub>}</TermTab>
            ))}
          </TermTabs>
        </TermMain>
      </Terminal>

      <StatusBar>
        <Status>For Help, press F1</Status>
        {STATUS.map(([text, w]) => (
          <Status key={text} $w={w}>{text}</Status>
        ))}
        <Status $w={130}>
          <svg width="24" height="13" shapeRendering="crispEdges" aria-hidden="true">
            {Array.from({ length: 8 }, (_, i) => (
              <g key={i}>
                <path d={`M${i * 3} 0h2v${9 - i}h-2z`} fill="#6b8e00" />
                <path d={`M${i * 3} ${10 - i}h2V13h-2z`} fill="#0a4a70" />
              </g>
            ))}
          </svg>
          555/2 kb
        </Status>
      </StatusBar>

      <Taskbar>
        <Start aria-label="Start">
          <Icon w={16} h={16}><path d="M0 2.200l6.500-.9v6.200H0zM7.300 1.200L16 0v7.500H7.300zM0 8.300h6.500v6.300L0 13.700zM7.300 8.300H16V16l-8.700-1.200z" fill="#fff" /></Icon>
        </Start>
        <Search>
          <Icon w={16} h={16}><path d="M6 10L.5 15.500" stroke="#202020" strokeWidth="1.500" /><circle cx="10" cy="6" r="5" fill="none" stroke="#202020" strokeWidth="1.400" /></Icon>
          <input placeholder="Type here to search" aria-label="Type here to search" />
          <Castle />
        </Search>
        <Apps>
          <TaskApp aria-label="VPN">
            <Icon w={24} h={24}>
              <rect width="24" height="24" rx="5" fill="#ee1030" />
              <path d="M12 3.500l7.500 2.500v6c0 5-3.500 7.500-7.500 9-4-1.500-7.500-4-7.500-9V6z" fill="#fff" />
              <path d="M12.500 9l1-1a2 2 0 013 3l-2 2a2 2 0 01-3 0M11.500 15l-1 1a2 2 0 01-3-3l2-2a2 2 0 013 0" fill="none" stroke="#ee1030" strokeWidth="1.500" />
            </Icon>
          </TaskApp>
          <TaskApp aria-label="Chrome">
            <Icon w={24} h={24}>
              <circle cx="12" cy="12" r="11" fill="#fbc116" />
              <path d="M12 12L2.500 6.500A11 11 0 0121.500 6.500H12z" fill="#ea4335" />
              <path d="M12 12L2.500 6.500A11 11 0 0011.500 23l5.200-8.500z" fill="#34a853" />
              <path d="M21.500 6.500H12v5.500l4.700 2.500L11.500 23A11 11 0 0021.500 6.500z" fill="#fbc116" />
              <circle cx="12" cy="12" r="5.500" fill="#fff" />
              <circle cx="12" cy="12" r="4.300" fill="#4285f4" />
            </Icon>
          </TaskApp>
          <TaskApp aria-label="MetaTrader" $on>
            <Icon w={24} h={24}>
              <rect x="1.500" y="2.500" width="15" height="12" fill="#e8f4ff" stroke="#2f88d8" />
              <path d="M1 3.500h16" stroke="#2f88d8" strokeWidth="3" />
              <rect x="9.500" y="7.500" width="13" height="14" fill="#d8ecff" stroke="#2f88d8" />
              <path d="M11 11l2 6 3-6 2 6 3-6" fill="none" stroke="#2f88d8" />
              <circle cx="7" cy="11" r="4" fill="#f0a050" stroke="#b86820" />
              <path d="M1 22c0-9 12-9 12 0z" fill="#6ab840" stroke="#3a8820" />
            </Icon>
          </TaskApp>
        </Apps>
        <AppScroll><Chevron up /><Chevron /></AppScroll>
        <Address>
          Address
          <AddressBox>
            <input aria-label="Address" />
            <BoxButton aria-label="Show addresses"><Icon w={9} h={6}><path d="M.5.500l4 4 4-4" fill="none" stroke="#404040" strokeWidth="1.200" /></Icon></BoxButton>
            <BoxButton $line aria-label="Refresh">
              <Icon w={12} h={12}><path d="M3 2.500a4.500 4.500 0 106 0M5.500 1.500H9.500V5.500" fill="none" stroke="#707070" strokeWidth="1.500" /></Icon>
            </BoxButton>
          </AddressBox>
        </Address>
        <Weather>
          <Icon w={24} h={22}>
            <path d="M5 14a5 5 0 010-9 7 7 0 0112-1 5 5 0 013 10z" fill="#c4d8f0" />
            <path d="M8 10c2 3 3 4 3 5.500a3 3 0 01-6 0C5 14 6 13 8 10zM16 9c2 3 4 5 4 7a3.500 3.500 0 01-7 0c0-2 1-4 3-7z" fill="#1f9cf0" />
          </Icon>
          26°C
        </Weather>
        <Tray>
          <TrayButton aria-label="Hidden icons"><Icon w={12} h={7}><path d="M.5 6.500l5.500-5.500 5.500 5.500" fill="none" stroke="#fff" strokeWidth="1.400" /></Icon></TrayButton>
          <TrayButton aria-label="Meet now"><Icon w={13} h={17}><path d="M1.500 5.500h7v6h-7zM8.500 8l3-2v5l-3-2M2 3q4-3 8 0M2 14q4 3 8 0" fill="none" stroke="#fff" /></Icon></TrayButton>
          <TrayButton aria-label="Battery"><Icon w={17} h={12}><path d="M2 0v3M5 0v3M1 3h5v2q0 2-2.500 2T1 5zM3.500 7v3M7 2.500h8v7H5M16 4.500v3M8.500 4.500l4 4M12.500 4.500l-4 4" fill="none" stroke="#fff" /></Icon></TrayButton>
          <TrayButton aria-label="Network"><Icon w={17} h={14}><path d="M5 2.500h11v7H5M.5.5h4v4h-4zM2.500 5v8h10M10.500 10v3" fill="none" stroke="#fff" /></Icon></TrayButton>
          <TrayButton aria-label="Volume"><Icon w={17} h={14}><path d="M.5 5h3l4-3.500v11L3.500 9h-3zM9.500 5q1.500 2 0 4M11.500 3q3 4 0 8M13.500 1q4.500 6 0 12" fill="none" stroke="#fff" /></Icon></TrayButton>
        </Tray>
        <Clock>17:56<br />15/07/2022</Clock>
        <Notices aria-label="3 notifications">
          <svg width="26" height="26">
            <path d="M1 2h16v12h-9l-3 3v-3H1z" fill="#fff" />
            <path d="M4 5.500h10M4 8.500h10M4 11.500h6" stroke="#1c1c1c" />
            <circle cx="16" cy="17" r="8" fill="#303030" fillOpacity=".9" stroke="#909090" />
            <text x="16" y="21" fontSize="11" fill="#fff" textAnchor="middle">3</text>
          </svg>
        </Notices>
        <Hub>
          <Icon w={20} h={20}>
            <rect width="20" height="20" rx="3" fill="#d0492f" fillOpacity=".85" />
            <path d="M6 5L4.500 3M14 5l1.500-2" stroke="#e8c8c0" strokeWidth="1.300" />
            <circle cx="10" cy="10.500" r="5.500" fill="#e8c8c0" />
            <rect x="5.500" y="8.500" width="9" height="4" rx="2" fill="#b84830" />
            <circle cx="8" cy="10.500" r="1" fill="#fff" />
            <circle cx="12" cy="10.500" r="1" fill="#fff" />
          </Icon>
          EAHub
        </Hub>
      </Taskbar>
    </Page>
  );
}
